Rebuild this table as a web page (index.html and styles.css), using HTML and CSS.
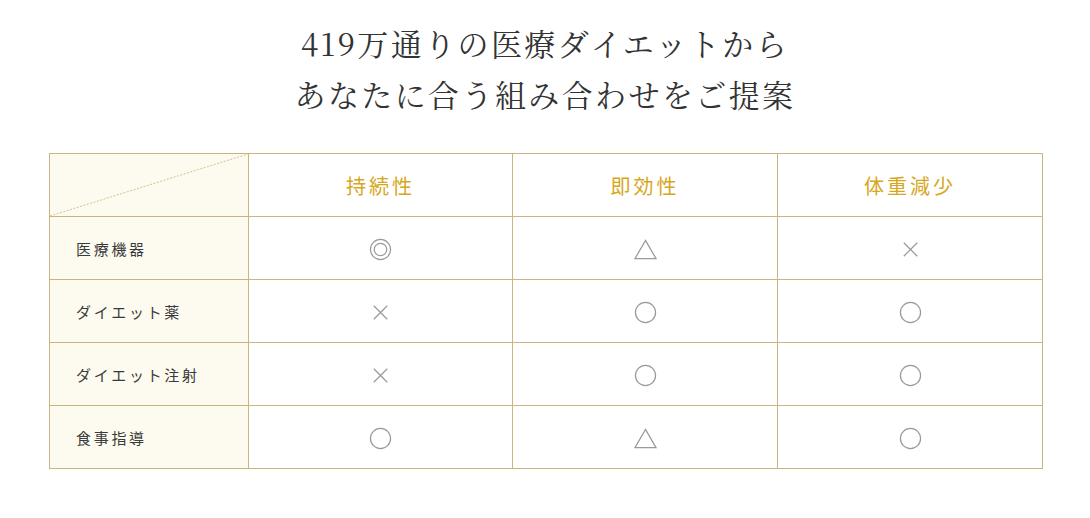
FILE: index.html
```html
<!DOCTYPE html>
<html lang="ja">
<head>
<meta charset="utf-8">
<link rel="stylesheet" href="styles.css">
</head>
<body>
<section class="compare">
  <h2 class="title">419万通りの医療ダイエットから<br>あなたに合う組み合わせをご提案</h2>
  <table class="table">
    <colgroup>
      <col class="col-label"><col class="col-a"><col class="col-b"><col class="col-b">
    </colgroup>
    <thead>
      <tr>
        <th class="corner"><svg class="diag" viewBox="0 0 198 62" preserveAspectRatio="none"><line x1="0" y1="62" x2="198" y2="0" /></svg></th>
        <th class="head">持続性</th>
        <th class="head">即効性</th>
        <th class="head">体重減少</th>
      </tr>
    </thead>
    <tbody>
      <tr>
        <th class="label">医療機器</th>
        <td><svg class="mark" viewBox="0 0 24 24"><circle cx="12" cy="12" r="10.5"/><circle cx="12" cy="12" r="6.5"/></svg></td>
        <td><svg class="mark" viewBox="0 0 24 24"><path d="M12 2.5 L23 21.5 L1 21.5 Z"/></svg></td>
        <td><svg class="mark" viewBox="0 0 24 24"><path d="M5 5 L19 19 M19 5 L5 19"/></svg></td>
      </tr>
      <tr>
        <th class="label">ダイエット薬</th>
        <td><svg class="mark" viewBox="0 0 24 24"><path d="M5 5 L19 19 M19 5 L5 19"/></svg></td>
        <td><svg class="mark" viewBox="0 0 24 24"><circle cx="12" cy="12" r="10.5"/></svg></td>
        <td><svg class="mark" viewBox="0 0 24 24"><circle cx="12" cy="12" r="10.5"/></svg></td>
      </tr>
      <tr>
        <th class="label">ダイエット注射</th>
        <td><svg class="mark" viewBox="0 0 24 24"><path d="M5 5 L19 19 M19 5 L5 19"/></svg></td>
        <td><svg class="mark" viewBox="0 0 24 24"><circle cx="12" cy="12" r="10.5"/></svg></td>
        <td><svg class="mark" viewBox="0 0 24 24"><circle cx="12" cy="12" r="10.5"/></svg></td>
      </tr>
      <tr>
        <th class="label">食事指導</th>
        <td><svg class="mark" viewBox="0 0 24 24"><circle cx="12" cy="12" r="10.5"/></svg></td>
        <td><svg class="mark" viewBox="0 0 24 24"><path d="M12 2.5 L23 21.5 L1 21.5 Z"/></svg></td>
        <td><svg class="mark" viewBox="0 0 24 24"><circle cx="12" cy="12" r="10.5"/></svg></td>
      </tr>
    </tbody>
  </table>
</section>
</body>
</html>
```
FILE: styles.css
```css
html, body {
  margin: 0;
  padding: 0;
  background: #ffffff;
}
body {
  font-family: "Noto Sans CJK JP", "Noto Sans", sans-serif;
  color: #333333;
}
.compare {
  padding: 17px 0 0 49px;
}
.title {
  margin: 0 0 34px 0;
  padding-right: 49px;
  text-align: center;
  font-family: "Noto Serif CJK JP", "Liberation Serif", "Noto Sans CJK JP", serif;
  font-weight: 400;
  font-size: 31px;
  line-height: 51px;
  letter-spacing: 2.4px;
  color: #333333;
}
.table {
  border-collapse: collapse;
  table-layout: fixed;
  width: 993px;
}
.col-label { width: 199px; }
.col-a { width: 264px; }
.col-b { width: 265px; }
.table th, .table td {
  border: 1px solid #c9b57f;
  height: 63px;
  padding: 0;
  box-sizing: border-box;
}
.corner {
  position: relative;
  background: #fdfaf0;
}
.diag {
  position: absolute;
  left: 0;
  top: 0;
  width: 100%;
  height: 100%;
  display: block;
}
.diag line {
  stroke: #d3c28f;
  stroke-width: 1;
  stroke-dasharray: 2 1.5;
  vector-effect: non-scaling-stroke;
}
.head {
  font-size: 20px;
  font-weight: 400;
  letter-spacing: 3px;
  color: #d6a71c;
  text-align: center;
}
.label {
  background: #fdfaf0;
  text-align: left;
  padding-left: 26px !important;
  font-size: 15px;
  font-weight: 400;
  letter-spacing: 2.7px;
  color: #3a3a3a;
}
.table td {
  text-align: center;
  vertical-align: middle;
}
.mark {
  display: inline-block;
  vertical-align: middle;
  width: 23px;
  height: 23px;
  fill: none;
  stroke: #9a9a9a;
  stroke-width: 1.3;
}
```
